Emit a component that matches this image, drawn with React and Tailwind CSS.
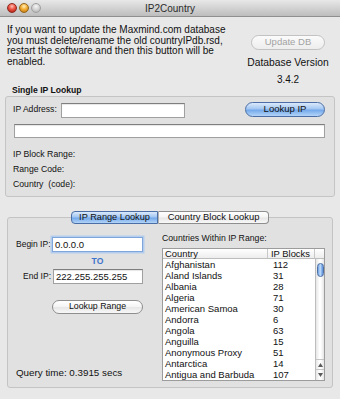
import React from 'react';

const countries = [
  ['Afghanistan', '112'],
  ['Aland Islands', '31'],
  ['Albania', '28'],
  ['Algeria', '71'],
  ['American Samoa', '30'],
  ['Andorra', '6'],
  ['Angola', '63'],
  ['Anguilla', '15'],
  ['Anonymous Proxy', '51'],
  ['Antarctica', '14'],
  ['Antigua and Barbuda', '107'],
];

const lights = {
  red: 'bg-[radial-gradient(circle_at_50%_30%,#ffc1b6_0%,#ec5242_45%,#a3160c_100%)] border-[#8a2a20]',
  amber: 'bg-[radial-gradient(circle_at_50%_30%,#fff0bf_0%,#f4ae33_45%,#b46a08_100%)] border-[#94661c]',
  gray: 'bg-[radial-gradient(circle_at_50%_30%,#f6f6f6_0%,#d2d2d2_50%,#a9a9a9_100%)] border-[#a0a0a0]',
};

// aqua styles
const blueAqua =
  'bg-[linear-gradient(to_bottom,#dbe9fb_0%,#a2c6f2_46%,#73a8ea_54%,#b3d4f8_100%)] border-[#4b6ea6]';
const whiteAqua =
  'bg-[linear-gradient(to_bottom,#ffffff_0%,#f5f5f5_46%,#e7e7e7_54%,#f8f8f8_100%)] border-[#8e8e8e]';
const field = 'bg-white border border-[#a0a0a0] border-t-[#7e7e7e] shadow-[inset_0_1px_1px_rgba(0,0,0,0.1)]';

function Scrollbar() {
  return (
    <div className="flex-1 flex flex-col border-l border-[#bdbdbd] bg-[linear-gradient(to_right,#e6e6e6,#ffffff_45%,#ffffff_60%,#e4e4e4)]">
      <div className="mt-[4px] mx-auto w-[7px] h-[14px] rounded-full border border-[#4d6fa3] bg-[linear-gradient(to_right,#6d9fe0,#c5defa_45%,#9cc3f2_60%,#5a8dd6)]" />
      <div className="flex-1" />
      <div className="h-[10px] border-t border-[#c4c4c4] flex items-center justify-center">
        <svg width="5" height="4" viewBox="0 0 5 4">
          <path d="M2.5 0 L5 4 L0 4 Z" fill="#5a5a5a" />
        </svg>
      </div>
      <div className="h-[11px] border-t border-[#c4c4c4] flex items-center justify-center">
        <svg width="5" height="4" viewBox="0 0 5 4">
          <path d="M0 0 L5 0 L2.5 4 Z" fill="#5a5a5a" />
        </svg>
      </div>
    </div>
  );
}

export default function App() {
  return (
    <div className="w-[340px] h-[399px] overflow-hidden bg-[#e8e8e8] text-[#111111] font-['Liberation_Sans',Arial,sans-serif] flex flex-col">
      {/* title bar */}
      <div className="relative h-[17px] shrink-0 flex items-center gap-[2px] pl-[7px] bg-[linear-gradient(to_bottom,#e8e8e8,#bdbdbd)] border-b border-[#8f8f8f]">
        <span className={`w-[10px] h-[10px] rounded-full border ${lights.red}`} />
        <span className={`w-[10px] h-[10px] rounded-full border ${lights.amber}`} />
        <span className={`w-[10px] h-[10px] rounded-full border ${lights.gray}`} />
        <span className="absolute inset-0 flex items-center justify-center text-[10px] text-[#2b2b2b]">IP2Country</span>
      </div>

      {/* update notice */}
      <div className="flex pl-[7px] pt-[8px]">
        <div className="w-[235px] text-[10px] leading-[10.7px] whitespace-nowrap">
          <div>If you want to update the Maxmind.com database</div>
          <div>you must delete/rename the old countryIPdb.rsd,</div>
          <div>restart the software and then this button will be</div>
          <div>enabled.</div>
        </div>
        <div className="flex-1 flex flex-col items-center pr-[6px]">
          <button className="mt-[10px] w-[74px] h-[15px] rounded-full border border-[#c2c2c2] bg-[linear-gradient(to_bottom,#fbfbfb,#ededed)] text-[9.5px] text-[#a2a2a2] flex items-center justify-center">
            Update DB
          </button>
          <div className="mt-[7.5px] text-[10.3px] leading-[10.5px] whitespace-nowrap">Database Version</div>
          <div className="mt-[6.5px] text-[10px] leading-[10.5px]">3.4.2</div>
        </div>
      </div>

      {/* single ip lookup */}
      <div className="pl-[12px] text-[8.6px] leading-[10px] font-bold">Single IP Lookup</div>
      <div className="mx-[5px] mt-[1px] h-[101px] shrink-0 rounded-[3px] border border-[#c4c4c4] bg-[#e1e1e1] pl-[7px] pr-[9px] pt-[5px]">
        <div className="flex items-start">
          <span className="w-[48px] text-[8.6px] leading-[14px] whitespace-nowrap">IP Address:</span>
          <div className={`mt-[1px] w-[124px] h-[15px] ${field}`} />
          <button className={`ml-auto w-[80px] h-[15px] rounded-full border ${blueAqua} text-[9.5px] flex items-center justify-center`}>
            Lookup IP
          </button>
        </div>
        <div className={`mt-[6px] ml-[1px] w-[311px] h-[14px] ${field}`} />
        <div className="mt-[9px] text-[8.7px] leading-[15px] whitespace-pre">
          <div>IP Block Range:</div>
          <div>Range Code:</div>
          <div>Country  (code):</div>
        </div>
      </div>

      {/* tabs */}
      <div className="relative z-10 mt-[14px] flex justify-center">
        <div className={`w-[87px] h-[13px] rounded-l-[4px] border ${blueAqua} text-[9.2px] flex items-center justify-center`}>
          IP Range Lookup
        </div>
        <div className={`w-[111px] h-[13px] rounded-r-[4px] border border-l-[#b0b0b0] ${whiteAqua} text-[9.4px] flex items-center justify-center`}>
          Country Block Lookup
        </div>
      </div>

      <div className="mx-[7px] -mt-[7px] h-[171px] shrink-0 rounded-[3px] border border-[#c4c4c4] bg-[#e1e1e1] flex pt-[15px]">
        {/* left column */}
        <div className="w-[135px] pl-[8px] pt-[4px] pb-[9px] flex flex-col">
          <div className="flex items-center">
            <span className="w-[34px] text-right text-[8.5px] whitespace-nowrap">Begin IP:</span>
            <div className="ml-[2px] w-[91px] h-[15px] bg-white border border-[#7ea6da] shadow-[0_0_0_1.5px_#b4cdee] text-[9.5px] leading-[13px] pl-[2px]">
              0.0.0.0
            </div>
          </div>
          <div className="ml-[36px] mt-[4px] w-[91px] text-center text-[8.6px] leading-[10px] font-bold text-[#3f74cc]">TO</div>
          <div className="flex items-center mt-[3px]">
            <span className="w-[35px] text-right text-[8.5px] whitespace-nowrap">End IP:</span>
            <div className={`ml-[2px] w-[90px] h-[15px] ${field} text-[9.5px] leading-[13px] pl-[2px]`}>222.255.255.255</div>
          </div>
          <button className={`ml-[36px] mt-[16px] w-[91px] h-[14px] rounded-full border ${whiteAqua} text-[8.8px] flex items-center justify-center`}>
            Lookup Range
          </button>
          <div className="mt-auto text-[9.8px] leading-[10px] whitespace-nowrap">Query time: 0.3915 secs</div>
        </div>

        {/* right column */}
        <div className="ml-[19px] w-[163px] flex flex-col">
          <div className="text-[8.7px] leading-[10px] whitespace-nowrap">Countries Within IP Range:</div>
          <div className="mt-[5px] border border-[#9c9c9c] bg-white">
            <div className="flex h-[10px] border-b border-[#bdbdbd] bg-[linear-gradient(to_bottom,#ffffff,#ededed)] text-[9.4px] leading-[9px]">
              <div className="w-[105px] pl-[2px] border-r border-[#c8c8c8]">Country</div>
              <div className="w-[47px] pl-[3px] border-r border-[#c8c8c8] whitespace-nowrap">IP Blocks</div>
              <div className="flex-1" />
            </div>
            <div className="flex">
              <div className="w-[152px]">
                {countries.map(([name, blocks]) => (
                  <div key={name} className="flex h-[11px] text-[9.5px] leading-[11px]">
                    <span className="w-[105px] pl-[2px] whitespace-nowrap">{name}</span>
                    <span className="pl-[5px]">{blocks}</span>
                  </div>
                ))}
              </div>
              <Scrollbar />
            </div>
          </div>
        </div>
      </div>
    </div>
  );
}
